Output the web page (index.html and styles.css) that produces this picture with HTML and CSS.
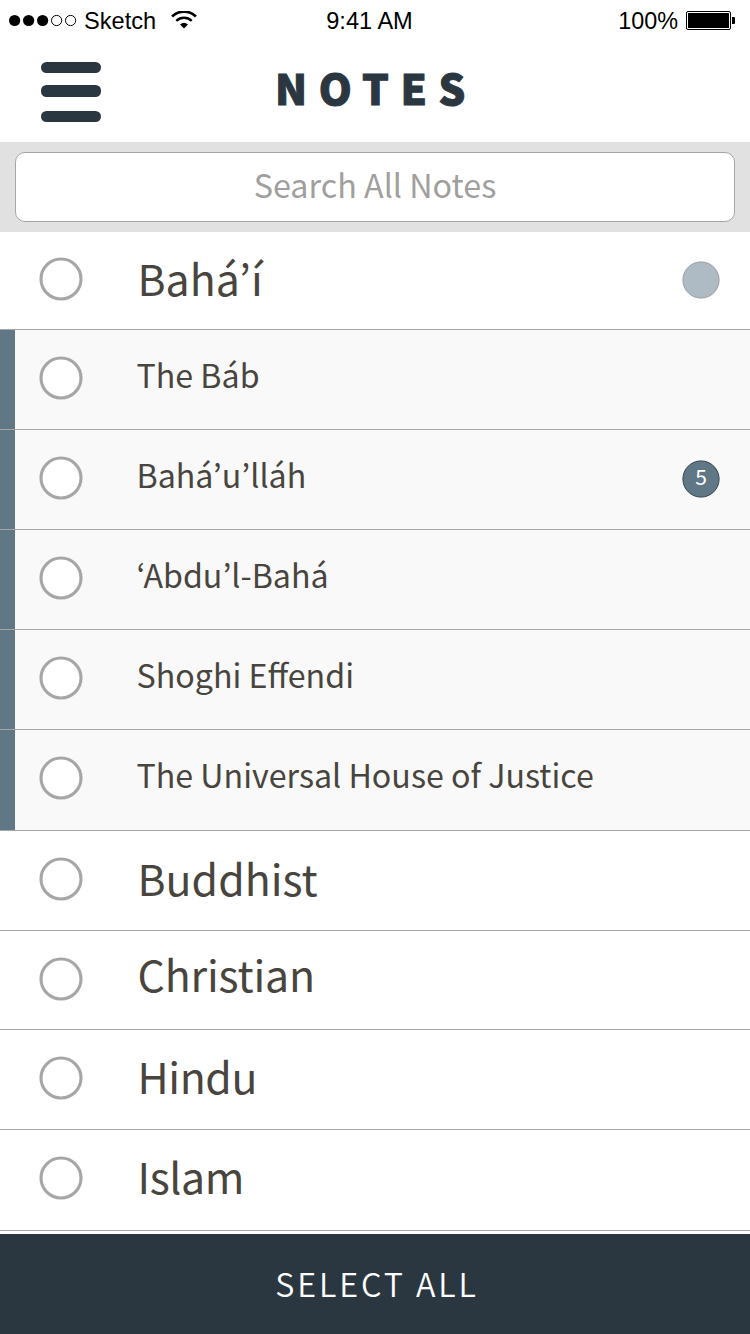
FILE: index.html
```html
<!DOCTYPE html>
<html lang="en">
<head>
<meta charset="utf-8">
<title>Notes</title>
<link rel="stylesheet" href="styles.css">
</head>
<body>
<svg width="0" height="0" class="defs"><symbol id="check" viewBox="0 0 44 44"><circle cx="22" cy="22" r="20" fill="#fff" stroke="#a6a6a6" stroke-width="3.1"/></symbol></svg>
<div class="status">
  <div class="carrier">
    <svg class="signal" width="68" height="13" viewBox="0 0 68 13"><g fill="#000"><circle cx="5.6" cy="6.5" r="5.6"/><circle cx="19.6" cy="6.5" r="5.6"/><circle cx="33.6" cy="6.5" r="5.6"/></g><g fill="none" stroke="#000"><circle cx="47.6" cy="6.5" r="5.1"/><circle cx="61.6" cy="6.5" r="5.1"/></g></svg>
    <span class="carrier-name">Sketch</span>
    <svg class="wifi" width="26" height="18" viewBox="0 0 26 18"><g fill="none" stroke="#000"><path d="M1.1 5.4A17.3 17.3 0 0 1 24.9 5.4" stroke-width="2.7"/><path d="M5.3 9.8A11.2 11.2 0 0 1 20.7 9.8" stroke-width="2.5"/></g><path d="M9 13.5Q13 10.2 17 13.5L13 17.5Z"/></svg>
  </div>
  <span class="time">9:41 AM</span>
  <div class="power">
    <span class="percent">100%</span>
    <svg class="battery" width="50" height="19" viewBox="0 0 50 19"><rect x=".5" y=".5" width="44" height="18" rx="1.5" fill="none" stroke="#000"/><rect x="2" y="2" width="41" height="15" rx=".5"/><path d="M46 6h2q1 0 1 1v5q0 1-1 1h-2z"/></svg>
  </div>
</div>
<header class="header">
  <div class="menu"><i class="bar"></i><i class="bar"></i><i class="bar"></i></div>
  <h1 class="title">NOTES</h1>
</header>
<div class="search"><div class="field">Search All Notes</div></div>
<main class="list">
  <div class="row row-first"><svg class="check"><use href="#check"/></svg><span class="label">Bahá’í</span><svg class="badge badge-muted" viewBox="0 0 38 38"><circle cx="19" cy="19" r="18.1"/></svg></div>
  <div class="row sub"><svg class="check"><use href="#check"/></svg><span class="label">The Báb</span></div>
  <div class="row sub"><svg class="check"><use href="#check"/></svg><span class="label">Bahá’u’lláh</span><svg class="badge" viewBox="0 0 38 38"><circle cx="19" cy="19" r="18.1"/><text x="19" y="25.3">5</text></svg></div>
  <div class="row sub"><svg class="check"><use href="#check"/></svg><span class="label">‘Abdu’l-Bahá</span></div>
  <div class="row sub"><svg class="check"><use href="#check"/></svg><span class="label">Shoghi Effendi</span></div>
  <div class="row sub sub-last"><svg class="check"><use href="#check"/></svg><span class="label">The Universal House of Justice</span></div>
  <div class="row"><svg class="check"><use href="#check"/></svg><span class="label label-low">Buddhist</span></div>
  <div class="row row-short"><svg class="check"><use href="#check"/></svg><span class="label label-high">Christian</span></div>
  <div class="row"><svg class="check"><use href="#check"/></svg><span class="label label-tight">Hindu</span></div>
  <div class="row row-tall"><svg class="check"><use href="#check"/></svg><span class="label label-tight">Islam</span></div>
</main>
<footer class="footer">SELECT ALL</footer>
</body>
</html>
```
FILE: styles.css
```css
* { box-sizing: border-box; }
body {
  margin: 0;
  width: 750px;
  height: 1334px;
  display: flex;
  flex-direction: column;
  overflow: hidden;
  background: #fff;
  color: #48443e;
  font-family: "Noto Sans CJK KR", "Noto Sans", sans-serif;
}
.defs { flex: none; display: none; }
.status {
  height: 40px;
  display: grid;
  grid-template-columns: 1fr auto 1fr;
  padding: 0 14px 0 9px;
  color: #000;
  font: 23.6px/42px "Liberation Sans", Arial, sans-serif;
}
.carrier, .power { display: flex; align-items: flex-start; }
.power { justify-content: flex-end; }
.signal { margin-top: 14px; }
.carrier-name { margin-left: 7px; }
.wifi { margin: 11px 0 0 15px; }
.time { padding-right: 6px; }
.percent { font-size: 23.4px; }
.battery { margin: 11px 0 0 8px; }
.header {
  height: 102px;
  display: grid;
  grid-template-columns: 60px 1fr 60px;
  padding: 22px 41px 0;
}
.menu {
  display: grid;
  grid-template-rows: 11px 12px 11px;
  row-gap: 13px;
  height: 60px;
}
.bar { height: 11px; border-radius: 5.5px; background: #2a3741; }
.bar:nth-child(2) { margin-top: -1px; height: 12px; }
.title {
  margin: 0;
  padding-left: 2px;
  text-align: center;
  color: #2a3741;
  font-size: 42px;
  font-weight: 900;
  line-height: 49px;
  letter-spacing: 11.6px;
  -webkit-text-stroke: 1px #2a3741;
}
.search { height: 90px; padding: 10px 15px; background: #e1e1e1; }
.field {
  height: 70px;
  border: 1px solid #a6a6a6;
  border-radius: 10px;
  background: #fff;
  color: #a09f9d;
  font-size: 32.3px;
  line-height: 63px;
  text-align: center;
}
.list { height: 1002px; }
.row {
  display: flex;
  align-items: flex-start;
  height: 100px;
  padding: 0 30px 0 39px;
  border-bottom: 1px solid #a6a6a6;
}
.row-first { height: 98px; }
.row-short { height: 99px; }
.row-tall, .sub-last { height: 101px; }
.check { flex: none; width: 44px; height: 44px; margin-top: 26px; }
.row-first .check { margin-top: 25px; }
.label {
  margin: 15px 0 0 54.5px;
  font-size: 42.8px;
  line-height: 60px;
  white-space: nowrap;
}
.label-low { margin-top: 16px; }
.label-high { margin-top: 12px; letter-spacing: -.15px; }
.label-tight { letter-spacing: -.4px; }
.sub { background: linear-gradient(90deg, #607786 15px, #f9f9f9 15px); }
.sub .label {
  margin: 14px 0 0 53.5px;
  font-size: 32.2px;
  font-feature-settings: "liga" 1;
}
.badge {
  flex: none;
  width: 38px;
  height: 38px;
  margin: 30px 0 0 auto;
  fill: #607786;
  stroke: #34434f;
}
.badge text {
  fill: #fff;
  stroke: none;
  font-size: 21px;
  text-anchor: middle;
}
.badge-muted { margin-top: 29px; fill: #afbbc4; stroke: #979fa6; }
.footer {
  flex: none;
  height: 100px;
  padding-left: 4px;
  background: #2a3741;
  color: #fff;
  font-size: 32.3px;
  font-weight: 350;
  line-height: 99px;
  letter-spacing: 2.9px;
  text-align: center;
}
```
